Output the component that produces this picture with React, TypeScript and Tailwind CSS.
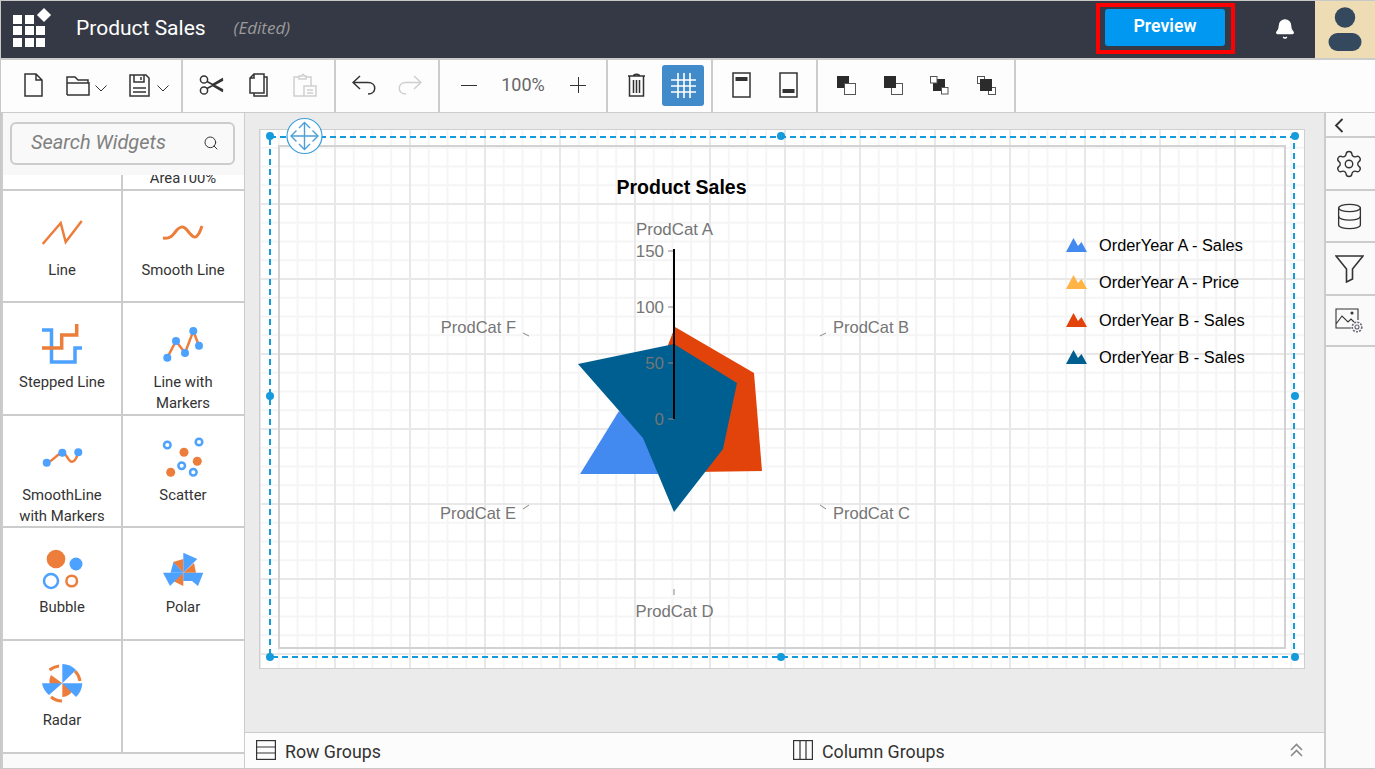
import React from "react";
import { Settings, Database, Search, Bell } from "lucide-react";

const ORANGE = "#ed7d3a";
const BLUE = "#4da1ff";
const INK = "#333";

function Chev({ className }: { className: string }) {
  return (
    <svg className={className} width="12" height="7" viewBox="0 0 12 7" fill="none" stroke={INK} strokeWidth="1">
      <path d="M0.5 0.5 L6 6 L11.5 0.5" />
    </svg>
  );
}

function Toolbar() {
  const group = "flex items-center h-full border-r-2 border-[#cccccc] pb-[2px] shrink-0";
  return (
    <div className="flex h-[53px] shrink-0 bg-[#fdfdfd] border-b border-[#cccccc]">
      <div className={`${group} w-[182px]`}>
        <svg className="ml-[23px]" width="19" height="24" viewBox="0 0 19 24" fill="none" stroke={INK} strokeWidth="1.5">
          <path d="M1 1 H12 L18 7 V23 H1 Z M12 1 V7 H18" />
        </svg>
        <svg className="ml-[23px]" width="24" height="21" viewBox="0 0 24 21" fill="none" stroke={INK} strokeWidth="1.5">
          <path d="M1 20 V2 H9 L12 5 H22 V8 M1 8 H23 V20 H1" />
        </svg>
        <Chev className="ml-[5px] mt-[6px]" />
        <svg className="ml-[22px]" width="21" height="23" viewBox="0 0 21 23" fill="none" stroke={INK} strokeWidth="1.5">
          <path d="M1 1 H17 L20 4 V22 H1 Z M5 1 V8 H15 V1 M12 3 V6 M4 14 H17 M4 18 H17" />
        </svg>
        <Chev className="ml-[7px] mt-[6px]" />
      </div>
      <div className={`${group} w-[153px]`}>
        <svg className="ml-[16px]" width="25" height="20" viewBox="0 0 25 20" fill="none" stroke={INK} strokeWidth="1.5">
          <circle cx="5" cy="4.5" r="3.6" />
          <circle cx="5" cy="15.5" r="3.6" />
          <path d="M8 6.5 L24 15 M8 13.5 L24 5 M13 10 L24 16.5 M13 10 L24 3.5" />
        </svg>
        <svg className="ml-[25px]" width="19" height="24" viewBox="0 0 19 24" fill="none" stroke={INK} strokeWidth="1.5">
          <path d="M5 1 H15 V20 H1 V5 Z M5 1 V5 H1 M15 4 H18 V23 H5 V20" />
        </svg>
        <svg className="ml-[25px]" width="24" height="24" viewBox="0 0 24 24" fill="none" stroke="#cfcfcf" strokeWidth="1.5">
          <path d="M6 4 H1 V23 H23 V13 H11 V23 M18 13 V4 H13 M6 6 V3 H9 C9 0.5 11 0.5 11 3 H13 V6 Z M14 17 H20 M14 20 H20" />
        </svg>
      </div>
      <div className={`${group} w-[104px]`}>
        <svg className="ml-[16px]" width="24" height="20" viewBox="0 0 24 20" fill="none" stroke={INK} strokeWidth="1.5">
          <path d="M8 1 L1 7.5 L8 14 M1 7.5 H16 C25 7.5 25 19 16 19" />
        </svg>
        <svg className="ml-[22px]" width="24" height="20" viewBox="0 0 24 20" fill="none" stroke="#cfcfcf" strokeWidth="1.5">
          <path d="M16 1 L23 7.5 L16 14 M23 7.5 H8 C-1 7.5 -1 19 8 19" />
        </svg>
      </div>
      <div className={`${group} w-[168px]`}>
        <svg className="ml-[21px]" width="16" height="16" viewBox="0 0 16 16" fill="none" stroke={INK} strokeWidth="1">
          <path d="M0 8.5 H16" />
        </svg>
        <div className="ml-[23px] mb-[2px] w-[46px] text-center text-[18px] text-[#666] font-['Roboto',sans-serif]">100%</div>
        <svg className="ml-[24px]" width="16" height="16" viewBox="0 0 16 16" fill="none" stroke={INK} strokeWidth="1">
          <path d="M0 8.5 H16 M8.5 0 V16" />
        </svg>
      </div>
      <div className={`${group} w-[105px]`}>
        <svg className="ml-[19px]" width="19" height="24" viewBox="0 0 19 24" fill="none" stroke={INK} strokeWidth="1.5">
          <path d="M1 3 H18 M2.5 3 V23 H16.5 V3 M6.5 3 C6.5 0.5 12.5 0.5 12.5 3 M6.5 7 V20 M9.5 7 V20 M12.5 7 V20" />
        </svg>
        <div className="ml-[16px] w-[42px] h-[41px] rounded-[3px] bg-[#428bca] flex items-center justify-center">
          <svg width="25" height="25" viewBox="0 0 25 25" fill="none" stroke="#ffffff" strokeWidth="1.6">
            <path d="M7 0 V25 M13 0 V25 M19 0 V25 M0 7 H25 M0 13 H25 M0 19 H25" />
          </svg>
        </div>
      </div>
      <div className={`${group} w-[105px]`}>
        <svg className="ml-[19px]" width="19" height="26" viewBox="0 0 19 26" fill="none" stroke={INK} strokeWidth="1.5">
          <rect x="1" y="1" width="17" height="24" />
          <rect x="3.5" y="5" width="12" height="4" fill={INK} stroke="none" />
        </svg>
        <svg className="ml-[28px]" width="19" height="26" viewBox="0 0 19 26" fill="none" stroke={INK} strokeWidth="1.5">
          <rect x="1" y="1" width="17" height="24" />
          <rect x="3.5" y="17" width="12" height="4" fill={INK} stroke="none" />
        </svg>
      </div>
      <div className={`${group} w-[198px]`}>
        <svg className="ml-[19px]" width="20" height="20" viewBox="0 0 20 20">
          <rect x="0" y="1" width="12" height="12" fill="#2b2b2b" />
          <rect x="7.5" y="8.5" width="11" height="11" fill="#fff" stroke="#555" />
        </svg>
        <svg className="ml-[27px]" width="20" height="20" viewBox="0 0 20 20">
          <rect x="7.5" y="8.5" width="11" height="11" fill="#fff" stroke="#555" />
          <rect x="0" y="1" width="12" height="12" fill="#2b2b2b" />
        </svg>
        <svg className="ml-[26px]" width="20" height="20" viewBox="0 0 20 20">
          <rect x="3" y="4" width="12" height="12" fill="#2b2b2b" />
          <rect x="0.5" y="1.5" width="6.5" height="6.5" fill="#fff" stroke="#555" />
          <rect x="11.5" y="12.5" width="6.5" height="6.5" fill="#fff" stroke="#555" />
        </svg>
        <svg className="ml-[27px]" width="20" height="20" viewBox="0 0 20 20">
          <rect x="0.5" y="1.5" width="7" height="7" fill="#fff" stroke="#555" />
          <rect x="11.5" y="12.5" width="7" height="7" fill="#fff" stroke="#555" />
          <rect x="3" y="4" width="12" height="12" fill="#2b2b2b" />
        </svg>
      </div>
    </div>
  );
}

function Header() {
  const sq = "w-[9px] h-[9px] bg-white";
  return (
    <div className="flex items-center h-[57px] shrink-0 bg-[#353945] font-['Roboto',sans-serif]">
      <div className="relative ml-[12px] mt-[3px] w-[33px] h-[32px] grid grid-cols-3 gap-[2px]">
        <div className={sq} />
        <div className={sq} />
        <div />
        <div className={sq} />
        <div className={sq} />
        <div className={sq} />
        <div className={sq} />
        <div className={sq} />
        <div className={sq} />
        <div className="absolute left-[26px] top-[-5px] w-[10px] h-[10px] bg-white rotate-45" />
      </div>
      <div className="ml-[30px] mb-[3px] text-[21px] text-white leading-none">Product Sales</div>
      <div className="ml-[28px] mb-[4px] text-[17px] italic text-[#9a9a9a] leading-none font-['Open_Sans',sans-serif]">(Edited)</div>
      <div className="ml-auto mb-[2px] w-[139px] h-[51px] border-[4px] border-[#ff0000] flex items-center justify-start pl-[4px]">
        <div className="ml-[1px] w-[120px] h-[37px] mb-[2px] pb-[3px] rounded-[3px] bg-[#0098f0] text-white text-[17.7px] font-semibold flex items-center justify-center">
          Preview
        </div>
      </div>
      <Bell className="ml-[39px] mt-[-2px]" size={22} fill="#ffffff" stroke="#ffffff" strokeWidth={1.5} />
      <div className="ml-[19px] w-[60px] h-full bg-[#eddcb4] flex items-center justify-center">
        <svg width="34" height="46" viewBox="0 0 34 46">
          <circle cx="17" cy="10.5" r="10.2" fill="#34495e" />
          <rect x="0.5" y="26" width="33" height="18" rx="9" fill="#34495e" />
        </svg>
      </div>
    </div>
  );
}

const icons: Record<string, React.ReactNode> = {
  Line: <path d="M0.7 33 L18.7 12 L23.7 31 L39.7 10" fill="none" stroke={ORANGE} strokeWidth="2.5" />,
  Smooth: (
    <path d="M0 27 C8 28 10 24 13 20 S20 14 24 19 S31 28 34 25 S37 20 39 15" fill="none" stroke={ORANGE} strokeWidth="3" />
  ),
  Stepped: (
    <g fill="none" strokeWidth="3.5">
      <path d="M0 7 H9.5 V39 H33 V25 H40" stroke={BLUE} />
      <path d="M0 25 H19.7 V12 H34.7 V1" stroke={ORANGE} />
    </g>
  ),
  Markers: (
    <g>
      <path d="M4.3 34.7 L13 18 L22 30 L30.3 8 L36 22.7" fill="none" stroke={ORANGE} strokeWidth="2.5" />
      <circle cx="4.3" cy="34.7" r="4" fill={BLUE} />
      <circle cx="13" cy="18" r="4" fill={BLUE} />
      <circle cx="22" cy="30" r="4" fill={BLUE} />
      <circle cx="30.3" cy="8" r="4" fill={BLUE} />
      <circle cx="36" cy="22.7" r="4" fill={BLUE} />
    </g>
  ),
  SmoothMarkers: (
    <g>
      <path d="M4.7 26.7 C10 26 16 17 20.3 16.7 S26 26 30 25.7 S35 20 36.3 16.3" fill="none" stroke={ORANGE} strokeWidth="2.5" />
      <circle cx="4.7" cy="26.7" r="4" fill={BLUE} />
      <circle cx="20.3" cy="16.7" r="4" fill={BLUE} />
      <circle cx="36.3" cy="16.3" r="4" fill={BLUE} />
    </g>
  ),
  Scatter: (
    <g>
      <g fill="none" stroke={BLUE} strokeWidth="2.5">
        <circle cx="4.3" cy="9" r="3.3" />
        <circle cx="36" cy="6" r="3.3" />
        <circle cx="18.7" cy="29.7" r="3.3" />
        <circle cx="30.3" cy="36.3" r="3.3" />
      </g>
      <g fill={ORANGE}>
        <circle cx="21" cy="16.3" r="4.5" />
        <circle cx="34.3" cy="25.3" r="4.5" />
        <circle cx="7.7" cy="36.3" r="4.5" />
      </g>
    </g>
  ),
  Bubble: (
    <g>
      <circle cx="14" cy="11" r="9.3" fill={ORANGE} />
      <circle cx="34" cy="16" r="6.5" fill={BLUE} />
      <circle cx="9" cy="33" r="7" fill="none" stroke={BLUE} strokeWidth="2.5" />
      <circle cx="29.7" cy="33" r="5.3" fill="none" stroke={ORANGE} strokeWidth="2.5" />
    </g>
  ),
  Polar: (
    <g>
      <path d="M20.3 24.7 L10 14 L20.3 11 Z" fill={ORANGE} />
      <path d="M20.3 24.7 L31 15 L33 24.7 Z" fill={ORANGE} />
      <path d="M20.3 24.7 V38 L10 33 Z" fill={ORANGE} />
      <path d="M20.3 24.7 V4.7 L34.3 11 Z" fill={BLUE} />
      <path d="M20.3 24.7 H40.3 L35 38 L29 33 L20.3 33 Z" fill={BLUE} />
      <path d="M20.3 24.7 H0 L7 38 Z" fill={BLUE} />
      <path d="M20.3 24.7 L10.5 14 L7.5 24.7 Z" fill={BLUE} />
    </g>
  ),
  Radar: (
    <g>
      <path d="M7.5 9 A18 18 0 0 1 17 5" fill="none" stroke={ORANGE} strokeWidth="3" />
      <path d="M33 10 A18 18 0 0 1 38 20" fill="none" stroke={ORANGE} strokeWidth="3" />
      <path d="M9 36 A18 18 0 0 0 20 40" fill="none" stroke={ORANGE} strokeWidth="3" />
      <path d="M20.3 22.3 L8 24 A13 13 0 0 1 9 14 Z" fill={ORANGE} />
      <path d="M20.3 22.3 L31 29 A13 13 0 0 1 20.3 36 Z" fill={ORANGE} />
      <path d="M20.3 22.3 V3 A20 20 0 0 1 34 9 Z" fill={BLUE} />
      <path d="M20.3 22.3 H40.3 A20 20 0 0 1 34 36 Z" fill={BLUE} />
      <path d="M20.3 22.3 H0 A20 20 0 0 0 7 34 Z" fill={BLUE} />
    </g>
  ),
};

function Cell({ icon, label, border }: { icon?: string; label?: string[]; border?: boolean }) {
  return (
    <div className={`flex flex-col items-center pt-5 ${border ? "w-[120px] border-r-2 border-[#cccccc]" : "w-[120px]"}`}>
      {icon && (
        <svg className="overflow-visible shrink-0" width="40" height="40" viewBox="0 0 40 40">
          {icons[icon]}
        </svg>
      )}
      {label && (
        <div className="mt-[9px] text-center text-[14.85px] leading-[21px] text-[#333]">
          {label.map((l) => (
            <div key={l}>{l}</div>
          ))}
        </div>
      )}
    </div>
  );
}

function WidgetPanel() {
  const row = "flex border-b-2 border-[#cccccc] overflow-hidden shrink-0";
  return (
    <div className="w-[243px] shrink-0 flex flex-col border-l-2 border-[#cccccc] font-['Roboto',sans-serif]">
      <div className="h-[62px] shrink-0 bg-[#f8f8f8] px-[7px] pt-[9px]">
        <div className="w-[225px] h-[43px] rounded-[6px] border-2 border-[#cccccc] bg-[#f9f9f9] flex items-center pl-[19px] pb-[4px]">
          <span className="text-[20px] italic text-[#808080]">Search Widgets</span>
          <Search className="ml-[37px] mt-[3px]" size={16} stroke="#333" strokeWidth={1.5} />
        </div>
      </div>
      <div className={`${row} h-[16px]`}>
        <div className="w-[120px] border-r-2 border-[#cccccc]" />
        <div className="w-[120px] flex items-end justify-center text-[14.85px] leading-[21px] text-[#333]">Area100%</div>
      </div>
      <div className={`${row} h-[112px]`}>
        <Cell icon="Line" label={["Line"]} border />
        <Cell icon="Smooth" label={["Smooth Line"]} />
      </div>
      <div className={`${row} h-[113px]`}>
        <Cell icon="Stepped" label={["Stepped Line"]} border />
        <Cell icon="Markers" label={["Line with", "Markers"]} />
      </div>
      <div className={`${row} h-[112px]`}>
        <Cell icon="SmoothMarkers" label={["SmoothLine", "with Markers"]} border />
        <Cell icon="Scatter" label={["Scatter"]} />
      </div>
      <div className={`${row} h-[113px]`}>
        <Cell icon="Bubble" label={["Bubble"]} border />
        <Cell icon="Polar" label={["Polar"]} />
      </div>
      <div className={`${row} h-[113px]`}>
        <Cell icon="Radar" label={["Radar"]} border />
        <Cell />
      </div>
      <div className="flex-1 bg-[#fafafa]" />
    </div>
  );
}

function LegendMark({ y, color }: { y: number; color: string }) {
  return (
    <path
      d={`M1066 ${y + 14} L1073.5 ${y} L1078 ${y + 8} L1081.5 ${y + 4} L1087 ${y + 14} Z`}
      fill={color}
    />
  );
}

function Chart() {
  const arial = "'Liberation Sans', Arial, sans-serif";
  const handles: [number, number][] = [
    [270, 136],
    [781, 136],
    [1295, 136],
    [270, 396],
    [1295, 396],
    [270, 657],
    [781, 657],
    [1295, 657],
  ];
  const labels: [string, number, number, "start" | "end" | "middle", number][] = [
    ["ProdCat A", 674.5, 235, "middle", 16.9],
    ["ProdCat B", 833, 333, "start", 16.5],
    ["ProdCat C", 833, 519, "start", 16.5],
    ["ProdCat D", 674.5, 617, "middle", 16.7],
    ["ProdCat E", 516, 519, "end", 16.5],
    ["ProdCat F", 516, 333, "end", 16.5],
  ];
  const legend: [string, number, string][] = [
    ["OrderYear A - Sales", 238, "#4289f0"],
    ["OrderYear A - Price", 275, "#ffb445"],
    ["OrderYear B - Sales", 313, "#e2430a"],
    ["OrderYear B - Sales", 350, "#005f91"],
  ];
  return (
    <svg className="absolute inset-0 overflow-visible" width="1044" height="538" viewBox="260 130 1044 538" fontFamily={arial}>
      <text x="681.5" y="194" textAnchor="middle" fontSize="19.5" fontWeight="700" fill="#000">Product Sales</text>
      {labels.map(([t, x, y, a, s]) => (
        <text key={t} x={x} y={y} textAnchor={a} fontSize={s} fill="#757575">{t}</text>
      ))}
      <g stroke="#888" strokeWidth="1" fill="none">
        <path d="M820 336 L826 333 M820 505 L826 509 M529 505 L523 509 M529 336 L523 333 M674 589 V595" />
        <path d="M668 251 H674 M668 307 H674 M668 363 H674 M668 419 H674" />
      </g>
      <path d="M580 474 L619 411 L660 440 L658 474 Z" fill="#4289f0" />
      <path d="M668 345 L675 327 L754 373 L762 471 L695 472 L690 400 Z" fill="#e2430a" />
      <path d="M674 344 L737 383 L723 449 L674 512 L643 438 L578 364 Z" fill="#005f91" />
      <path d="M668 363 H674 M668 419 H674" stroke="#888" strokeWidth="1" />
      <path d="M674 249 V419" stroke="#000" strokeWidth="2" />
      {[["150", 251], ["100", 307], ["50", 363], ["0", 419]].map(([t, y]) => (
        <text key={t} x="664" y={Number(y) + 6} textAnchor="end" fontSize="16.9" fill="#757575">{t}</text>
      ))}
      {legend.map(([t, y, c], i) => (
        <g key={i}>
          <LegendMark y={y} color={c} />
          <text x="1099" y={y + 13} fontSize="16.35" fill="#000">{t}</text>
        </g>
      ))}
      <rect x="270" y="137" width="1024" height="520" fill="none" stroke="#159bdc" strokeWidth="2" strokeDasharray="6 4" />
      {handles.map(([x, y]) => (
        <circle key={`${x}-${y}`} cx={x} cy={y} r="4" fill="#159bdc" />
      ))}
      <circle cx="304.5" cy="136" r="17.5" fill="#fff" stroke="#3c9fdc" strokeWidth="1.2" />
      <g fill="none" stroke="#4a9fd8" strokeWidth="1.4">
        <path d="M304.5 123 V149 M291 136 H318" />
        <path d="M299 128 L304.5 122.5 L310 128 M299 144 L304.5 149.5 L310 144 M296.5 130.5 L291 136 L296.5 141.5 M312.5 130.5 L318 136 L312.5 141.5" />
      </g>
    </svg>
  );
}

function Canvas() {
  return (
    <div className="flex-1 bg-[#ebebeb] pl-[14px] pt-[16px]">
      <div className="relative w-[1046px] h-[540px] border border-[#cfcfcf] bg-white bg-[linear-gradient(to_right,#e8e8e8_2px,transparent_2px),linear-gradient(to_bottom,#e8e8e8_2px,transparent_2px),linear-gradient(to_right,#f5f5f5_2px,transparent_2px),linear-gradient(to_bottom,#f5f5f5_2px,transparent_2px)] bg-[size:75px_75px,75px_75px,18.75px_18.75px,18.75px_18.75px] bg-[position:-1px_-2px] pl-[18px] pt-[15px]">
        <div className="w-[1008px] h-[504px] border-2 border-[#d2d2d2]" />
        <Chart />
      </div>
    </div>
  );
}

function BottomBar() {
  return (
    <div className="flex items-center h-[36px] shrink-0 bg-[#fcfcfc] border-t border-[#cccccc] text-[17.8px] text-[#333] font-['Roboto',sans-serif]">
      <svg className="ml-[11px] mb-[2px]" width="20" height="20" viewBox="0 0 20 20" fill="none" stroke="#333" strokeWidth="1.2">
        <rect x="0.6" y="0.6" width="18.8" height="18.8" />
        <path d="M0 7 H20 M0 13 H20" />
      </svg>
      <span className="ml-[9px] mt-[4px]">Row Groups</span>
      <svg className="ml-[412px] mb-[2px]" width="20" height="20" viewBox="0 0 20 20" fill="none" stroke="#333" strokeWidth="1.2">
        <rect x="0.6" y="0.6" width="18.8" height="18.8" />
        <path d="M7 0 V20 M13 0 V20" />
      </svg>
      <span className="ml-[9px] mt-[4px]">Column Groups</span>
      <svg className="ml-auto mr-[21px] mb-[2px]" width="13" height="14" viewBox="0 0 13 14" fill="none" stroke="#8a8a8a" strokeWidth="1.6">
        <path d="M1 7 L6.5 1.5 L12 7 M1 13 L6.5 7.5 L12 13" />
      </svg>
    </div>
  );
}

function RightPanel() {
  const cell = "flex items-center justify-center border-b-2 border-[#cccccc] shrink-0 pr-[3px]";
  return (
    <div className="w-[51px] shrink-0 flex flex-col border-l-2 border-[#cccccc] bg-[#fafafa]">
      <div className={`${cell} h-[25px] justify-start pl-[8px] pt-[2px]`}>
        <svg width="10" height="15" viewBox="0 0 10 15" fill="none" stroke="#333" strokeWidth="1.8">
          <path d="M8.5 1 L2 7.5 L8.5 14" />
        </svg>
      </div>
      <div className={`${cell} h-[53px]`}>
        <Settings size={30} stroke="#333" strokeWidth={1.1} />
      </div>
      <div className={`${cell} h-[52px]`}>
        <Database size={29} stroke="#333" strokeWidth={1.1} />
      </div>
      <div className={`${cell} h-[53px]`}>
        <svg width="29" height="28" viewBox="0 0 29 28" fill="none" stroke="#333" strokeWidth="1.6">
          <path d="M1 1 H28 L17.5 14 V24 L11.5 27 V14 Z" />
        </svg>
      </div>
      <div className={`${cell} h-[51px]`}>
        <svg width="28" height="26" viewBox="0 0 28 26" fill="none" stroke="#333" strokeWidth="1.1">
          <path d="M16 20 H1 V1 H23 V12 M1 16 L7 8 L13 14 L16 11 L19 14" />
          <circle cx="17" cy="5" r="1" fill="#333" />
          <circle cx="22" cy="19" r="2" stroke="#667" />
          <circle cx="22" cy="19" r="4.8" stroke="#667" strokeDasharray="2 1.2" strokeWidth="1.6" />
        </svg>
      </div>
    </div>
  );
}

export default function App() {
  return (
    <div className="w-[1375px] h-[769px] flex flex-col overflow-hidden bg-[#cccccc] border-y border-l border-[#c8c8c8]">
      <Header />
      <div className="h-[2px] shrink-0 bg-[#cccccc]" />
      <Toolbar />
      <div className="flex-1 flex min-h-0 bg-white">
        <WidgetPanel />
        <div className="flex-1 flex flex-col border-l border-[#cccccc]">
          <Canvas />
          <BottomBar />
        </div>
        <RightPanel />
      </div>
    </div>
  );
}
